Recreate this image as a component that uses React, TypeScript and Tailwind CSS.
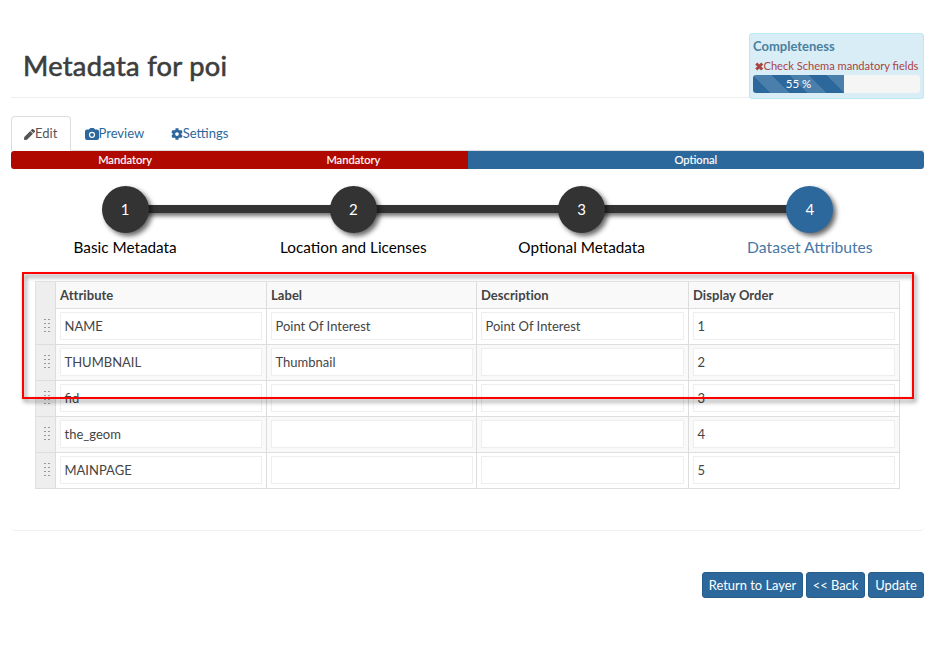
import React from "react";
import { FaPen, FaCog } from "react-icons/fa";

const steps = ["Basic Metadata", "Location and Licenses", "Optional Metadata", "Dataset Attributes"];

const rows = [
  ["NAME", "Point Of Interest", "Point Of Interest", "1"],
  ["THUMBNAIL", "Thumbnail", "", "2"],
  ["fid", "", "", "3"],
  ["the_geom", "", "", "4"],
  ["MAINPAGE", "", "", "5"],
];

const columns = "grid grid-cols-[20px_211px_210px_212px_211px]";

const buttons = [
  { label: "Return to Layer", width: "w-[101px]" },
  { label: "<< Back", width: "w-[59px]" },
  { label: "Update", width: "w-[56px]" },
];

function Header() {
  return (
    <header className="flex h-[65px] justify-between border-b border-[#eeeeee]">
      <h1 className="pt-[15px] pl-[12px] text-[27.3px] leading-[36px] tracking-[0.28px] text-[#3d3d3d] [-webkit-text-stroke:0.6px_#3d3d3d]">
        Metadata for poi
      </h1>
      <div className="h-[66px] w-[175px] shrink-0 rounded-[3px] border border-[#bce8f1] bg-[#d9edf7] pt-[3px] pl-[3px]">
        <div className="text-[13px] leading-[18px] font-bold text-[#4b7f9d]">Completeness</div>
        <div className="mt-[2px] flex h-[18px] items-center whitespace-nowrap pl-[2px] text-[11.1px] text-[#a94442]">
          <svg viewBox="0 0 8 8" className="h-[9px] w-[8.5px] shrink-0">
            <path d="M1.2 1.2 6.8 6.8M6.8 1.2 1.2 6.8" stroke="currentColor" strokeWidth="2.8" />
          </svg>
          Check Schema mandatory fields
        </div>
        <div className="h-[18px] w-[167px] overflow-hidden rounded-[3px] bg-[#f5f5f5]">
          <div className="h-full w-[91px] bg-[#2c689c] bg-[linear-gradient(45deg,rgba(255,255,255,.15)_25%,transparent_25%,transparent_50%,rgba(255,255,255,.15)_50%,rgba(255,255,255,.15)_75%,transparent_75%,transparent)] bg-[length:37px_37px] text-center text-[11.5px] leading-[18px] text-white">
            55 %
          </div>
        </div>
      </div>
    </header>
  );
}

function CameraIcon() {
  return (
    <svg viewBox="0 0 14 12" className="h-[12px] w-[14px]" fill="currentColor">
      <path
        fillRule="evenodd"
        d="M2 1.500h2L4.700.4Q5 0 5.500 0h3Q9 0 9.300.4L10 1.500h2a2 2 0 0 1 2 2V10a2 2 0 0 1-2 2H2a2 2 0 0 1-2-2V3.500a2 2 0 0 1 2-2ZM7 3.700a3.100 3.100 0 1 0 0 6.200 3.100 3.100 0 0 0 0-6.200Z"
      />
      <circle cx="7" cy="6.800" r="1.900" />
    </svg>
  );
}

function Tabs() {
  return (
    <nav className="mt-[18px] flex h-[35px] border-b border-[#dddddd] text-[13px] text-[#2c689c]">
      <a className="-mb-px flex w-[60px] items-center justify-center rounded-t-[4px] border border-b-0 border-[#dddddd] bg-white pr-px text-[#555555]">
        <FaPen className="mr-[0.5px] h-[11px] w-[11px]" />
        Edit
      </a>
      <a className="flex items-center pt-[1px] pl-[13.5px]">
        <CameraIcon />
        Preview
      </a>
      <a className="flex items-center pt-[1px] pl-[26.5px]">
        <FaCog className="h-[12px] w-[12px]" />
        Settings
      </a>
    </nav>
  );
}

function Wizard() {
  return (
    <>
      <div className="grid h-[17.5px] grid-cols-[1fr_1fr_2fr] overflow-hidden rounded-[3px] text-center text-[11.2px] leading-[17px] text-white [-webkit-text-stroke:0.15px_white]">
        <div className="bg-[#b00a00]">Mandatory</div>
        <div className="bg-[#b00a00]">Mandatory</div>
        <div className="bg-[#2c689c]">Optional</div>
      </div>
      <ol className="relative mt-[17.5px] grid grid-cols-4">
        <li className="absolute top-[19px] right-[114px] left-[114px] h-[8px] bg-[#333333] shadow-[2px_3px_4px_rgba(0,0,0,.55)]" />
        {steps.map((label, i) => (
          <li key={label} className="relative flex flex-col items-center">
            <span
              className={`flex h-[47px] w-[47px] items-center justify-center rounded-full text-[15px] text-white shadow-[3px_3px_5px_rgba(0,0,0,.6)] ${i === 3 ? "bg-[#2c689c]" : "bg-[#333333]"}`}
            >
              {i + 1}
            </span>
            <span
              className={`mt-[3px] leading-[22px] ${i === 3 ? "text-[15.7px] text-[#4878a5]" : "text-[15.3px] text-black"}`}
            >
              {label}
            </span>
          </li>
        ))}
      </ol>
    </>
  );
}

function Handle() {
  return (
    <div className="flex items-center justify-center border-r border-[#dddddd] bg-[#eeeeee] pl-[3px]">
      <svg width="8" height="14" viewBox="0 0 8 14" className="-mt-[2px]" shapeRendering="crispEdges">
        {[0, 4, 8, 12].map((y) => (
          <g key={y} fill="#999999">
            <rect x="1" y={y} width="2" height="1" />
            <rect x="5" y={y} width="2" height="1" />
          </g>
        ))}
      </svg>
    </div>
  );
}

function AttributeTable() {
  return (
    <div className="w-[865px] border-t border-l border-[#e2e2e2] text-[13px] text-[#444444]">
      <div className={`${columns} h-[27px] border-b border-[#dddddd] bg-[#f9f9f9] font-bold leading-[27px]`}>
        <div className="border-r border-[#dddddd] bg-[#eeeeee]" />
        {["Attribute", "Label", "Description", "Display Order"].map((h) => (
          <div key={h} className="border-r border-[#dddddd] pl-[4px] tracking-[0.05px]">
            {h}
          </div>
        ))}
      </div>
      {rows.map((row, i) => (
        <div key={row[0]} className={`${columns} h-[36px] border-b border-[#dddddd] ${i % 2 ? "bg-[#f9f9f9]" : "bg-white"}`}>
          <Handle />
          {row.map((value, j) => (
            <div key={j} className={`border-r border-[#dddddd] pt-[3px] pl-[4px] ${j === 1 ? "pr-[3px]" : "pr-[4px]"}`}>
              <div className="h-[28px] border border-[#eeeeee] bg-white pl-[3.5px] leading-[27px]">{value}</div>
            </div>
          ))}
        </div>
      ))}
    </div>
  );
}

export default function App() {
  return (
    <div className="relative h-[655px] w-[935px] overflow-hidden bg-white px-[11px] pt-[33px] font-['Lato',sans-serif]">
      <Header />
      <Tabs />
      <Wizard />
      <section className="mt-[3px] h-[270px] w-[913px] rounded-b-[4px] border-b border-[#f1f1f1] pt-[20px] pl-[24px]">
        <AttributeTable />
      </section>
      <div className="mt-[41px] flex w-[913px] justify-end gap-[3px] text-[12.9px] leading-[24px] text-white">
        {buttons.map(({ label, width }) => (
          <button key={label} className={`h-[26px] rounded-[3px] border border-[#275d8b] bg-[#2c689c] whitespace-nowrap ${width}`}>
            {label}
          </button>
        ))}
      </div>
      <div className="absolute top-[272px] left-[22px] h-[127px] w-[892px] border-2 border-[#ff0000] drop-shadow-[2px_3px_2px_rgba(0,0,0,.5)]" />
    </div>
  );
}
